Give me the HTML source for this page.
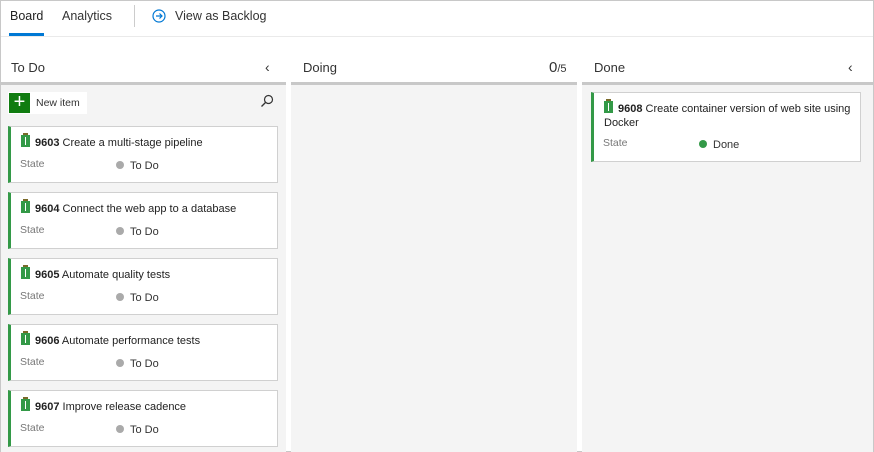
<!DOCTYPE html>
<html><head><style>
*{box-sizing:border-box;margin:0;padding:0}
body{width:874px;height:452px;background:#fff;font-family:"Liberation Sans",sans-serif;color:#222;position:relative;overflow:hidden;font-size:12px}
.frame{position:absolute;left:0;top:0;width:874px;height:452px;border:1px solid #c8c8c8}
.abs{position:absolute}
.tab{position:absolute;top:9px;font-size:12.5px;color:#333}
.col{position:absolute;top:82px;height:370px;background:#f4f4f4;border-top:3px solid #c8c8c8}
.hdr{position:absolute;top:60px;font-size:13px;color:#333}
.card{position:absolute;background:#fff;border:1px solid #d0d0d0;border-left:3px solid #339947;width:270px;height:57px}
.t{position:absolute;left:10px;top:8px;font-size:11px;color:#222;line-height:15px}
.t b{font-weight:bold}
.ic{display:inline-block;width:9px;height:12px;background:#339947;vertical-align:-1px;margin-right:5px;position:relative}
.ic:after{content:"";position:absolute;left:4px;top:2px;width:1px;height:8px;background:#fff}
.ic:before{content:"";position:absolute;left:2px;top:-2px;width:5px;height:2px;background:#7a6a2a}
.st{position:absolute;left:9px;top:31px;color:#777;font-size:10.5px}
.sv{position:absolute;left:105px;top:33px;font-size:11px;color:#333}
.dot{display:inline-block;width:8px;height:8px;border-radius:50%;background:#aaa;margin-right:6px}
</style></head><body>
<div class="frame"></div>
<div class="tab" style="left:10px;color:#222">Board</div>
<div class="abs" style="left:9px;top:33px;width:35px;height:3px;background:#0078d4"></div>
<div class="tab" style="left:62px">Analytics</div>
<div class="abs" style="left:134px;top:5px;width:1px;height:22px;background:#ccc"></div>
<svg class="abs" style="left:152px;top:9px" width="14" height="14" viewBox="0 0 14 14"><circle cx="7" cy="7" r="6" fill="none" stroke="#0078d4" stroke-width="1.2"/><path d="M4 7h6M7.5 4.5L10 7 7.5 9.5" fill="none" stroke="#0078d4" stroke-width="1.2"/></svg>
<div class="tab" style="left:175px">View as Backlog</div>
<div class="abs" style="left:1px;top:36px;width:872px;height:1px;background:#eaeaea"></div>

<div class="hdr" style="left:11px">To Do</div>
<div class="hdr" style="left:265px;font-size:14px;top:59px">&#8249;</div>
<div class="hdr" style="left:303px">Doing</div>
<div class="hdr" style="left:549px;top:59px;font-size:15px">0<span style="font-size:11px">/5</span></div>
<div class="hdr" style="left:594px">Done</div>
<div class="hdr" style="left:848px;font-size:14px;top:59px">&#8249;</div>

<div class="col" style="left:1px;width:285px"></div>
<div class="col" style="left:291px;width:286px"></div>
<div class="col" style="left:582px;width:291px"></div>

<div class="abs" style="left:8px;top:92px;width:79px;height:22px;background:#fff"></div>
<div class="abs" style="left:9px;top:93px;width:21px;height:20px;background:#107c10;color:#fff;font-size:20px;line-height:19px;text-align:center">+</div>
<div class="abs" style="left:36px;top:97px;font-size:10.5px;color:#333">New item</div>
<svg class="abs" style="left:260px;top:94px" width="14" height="14" viewBox="0 0 14 14"><circle cx="8.5" cy="5.5" r="4" fill="none" stroke="#333" stroke-width="1.2"/><path d="M5.5 8.5L1.5 12.5" stroke="#333" stroke-width="1.3"/></svg>

<div class="card" style="left:8px;top:126px"><div class="t"><span class="ic"></span><b>9603</b> Create a multi-stage pipeline</div><div class="st">State</div><div class="sv"><span class="dot"></span>To Do</div></div>
<div class="card" style="left:8px;top:192px"><div class="t"><span class="ic"></span><b>9604</b> Connect the web app to a database</div><div class="st">State</div><div class="sv"><span class="dot"></span>To Do</div></div>
<div class="card" style="left:8px;top:258px"><div class="t"><span class="ic"></span><b>9605</b> Automate quality tests</div><div class="st">State</div><div class="sv"><span class="dot"></span>To Do</div></div>
<div class="card" style="left:8px;top:324px"><div class="t"><span class="ic"></span><b>9606</b> Automate performance tests</div><div class="st">State</div><div class="sv"><span class="dot"></span>To Do</div></div>
<div class="card" style="left:8px;top:390px"><div class="t"><span class="ic"></span><b>9607</b> Improve release cadence</div><div class="st">State</div><div class="sv"><span class="dot"></span>To Do</div></div>

<div class="card" style="left:591px;top:92px;height:70px"><div class="t" style="width:255px;line-height:14px"><span class="ic"></span><b>9608</b> Create container version of web site using Docker</div><div class="st" style="top:44px">State</div><div class="sv" style="top:46px;left:105px"><span class="dot" style="background:#339947"></span>Done</div></div>
</body></html>
